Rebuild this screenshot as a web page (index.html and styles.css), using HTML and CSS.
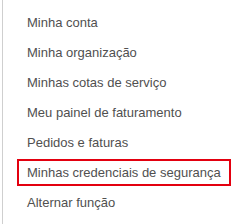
FILE: index.html
```html
<!DOCTYPE html>
<html>
<head>
<meta charset="utf-8">
<link rel="stylesheet" href="styles.css">
</head>
<body>
<div class="frame">
  <ul class="menu">
    <li class="item"><span class="label">Minha conta</span></li>
    <li class="item"><span class="label">Minha organização</span></li>
    <li class="item"><span class="label">Minhas cotas de serviço</span></li>
    <li class="item"><span class="label">Meu painel de faturamento</span></li>
    <li class="item"><span class="label">Pedidos e faturas</span></li>
    <li class="item highlighted"><span class="label">Minhas credenciais de segurança</span></li>
    <li class="item"><span class="label">Alternar função</span></li>
  </ul>
</div>
</body>
</html>
```
FILE: styles.css
```css
html, body {
  margin: 0;
  padding: 0;
  background: #fff;
}
.frame {
  width: 242px;
  height: 224px;
  box-sizing: border-box;
  padding-left: 2px;
  overflow: hidden;
}
.menu {
  list-style: none;
  margin: 0;
  padding: 7px 0 0 0;
  border-left: 1px solid #cfcfcf;
  height: 100%;
  box-sizing: border-box;
}
.item {
  height: 30px;
  display: flex;
  align-items: center;
  padding-left: 24px;
  font-family: "Liberation Sans", Arial, sans-serif;
  font-size: 13px;
  color: #505050;
}
.item.highlighted {
  margin: 2px 11px 1px 14px;
  height: 27px;
  box-sizing: border-box;
  padding-left: 8px;
  border: 2px solid #e3000f;
}
```
